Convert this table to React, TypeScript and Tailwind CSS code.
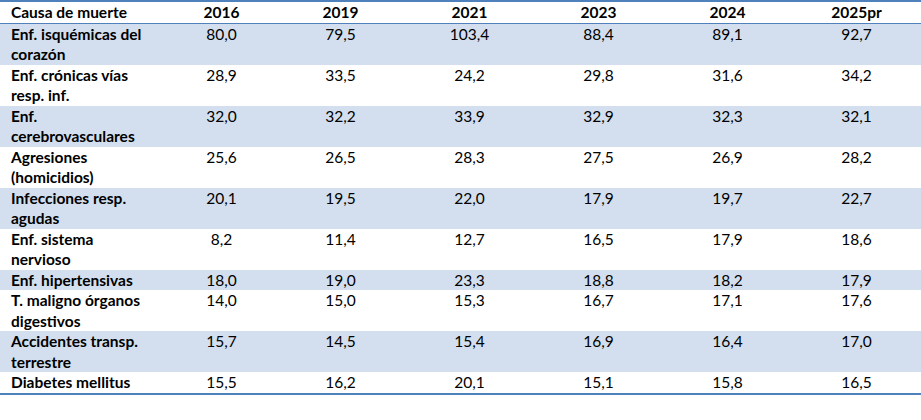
const years = ['2016', '2019', '2021', '2023', '2024', '2025pr'];

const rows: { label: string[]; values: string[] }[] = [
  { label: ['Enf. isquémicas del', 'corazón'], values: ['80,0', '79,5', '103,4', '88,4', '89,1', '92,7'] },
  { label: ['Enf. crónicas vías', 'resp. inf.'], values: ['28,9', '33,5', '24,2', '29,8', '31,6', '34,2'] },
  { label: ['Enf.', 'cerebrovasculares'], values: ['32,0', '32,2', '33,9', '32,9', '32,3', '32,1'] },
  { label: ['Agresiones', '(homicidios)'], values: ['25,6', '26,5', '28,3', '27,5', '26,9', '28,2'] },
  { label: ['Infecciones resp.', 'agudas'], values: ['20,1', '19,5', '22,0', '17,9', '19,7', '22,7'] },
  { label: ['Enf. sistema', 'nervioso'], values: ['8,2', '11,4', '12,7', '16,5', '17,9', '18,6'] },
  { label: ['Enf. hipertensivas'], values: ['18,0', '19,0', '23,3', '18,8', '18,2', '17,9'] },
  { label: ['T. maligno órganos', 'digestivos'], values: ['14,0', '15,0', '15,3', '16,7', '17,1', '17,6'] },
  { label: ['Accidentes transp.', 'terrestre'], values: ['15,7', '14,5', '15,4', '16,9', '16,4', '17,0'] },
  { label: ['Diabetes mellitus'], values: ['15,5', '16,2', '20,1', '15,1', '15,8', '16,5'] },
];

export default function App() {
  return (
    <div className="w-[921px] h-[420px] bg-white text-black font-['Lato','Liberation_Sans',sans-serif] text-[15.5px] leading-[20.5px]">
      <table className="w-[921px] table-fixed border-collapse border-t-2 border-b-2 border-[#4f81bd]">
        <colgroup>
          <col className="w-[167px]" />
          <col className="w-[109px]" />
          <col className="w-[129px]" />
          <col className="w-[129px]" />
          <col className="w-[129px]" />
          <col className="w-[129px]" />
          <col className="w-[129px]" />
        </colgroup>
        <thead>
          <tr className="border-b border-[#4f81bd] h-[22px]">
            <th className="text-left font-bold pl-[11px] align-middle">Causa de muerte</th>
            {years.map((y) => (
              <th key={y} className="text-center font-bold align-middle">{y}</th>
            ))}
          </tr>
        </thead>
        <tbody>
          {rows.map((r, i) => (
            <tr key={i} className={i % 2 === 0 ? 'bg-[#d3dfee]' : 'bg-white'}>
              <td className="pl-[11px] font-bold align-top whitespace-nowrap">
                {r.label.map((l, j) => (
                  <div key={j}>{l}</div>
                ))}
              </td>
              {r.values.map((v, j) => (
                <td key={j} className="text-center align-top">{v}</td>
              ))}
            </tr>
          ))}
        </tbody>
      </table>
    </div>
  );
}
